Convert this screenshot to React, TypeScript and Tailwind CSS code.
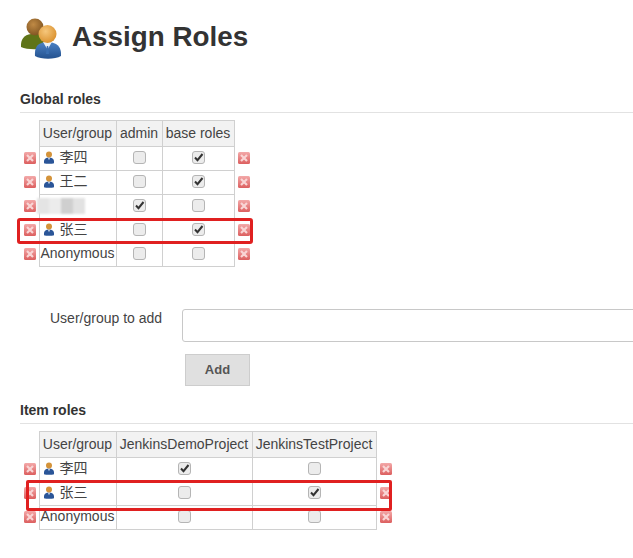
const FONT = "font-['Liberation_Sans','Noto_Sans_CJK_SC',sans-serif]";

const GLOBAL_ROLES = {
  columns: ["admin", "base roles"],
  widths: ["w-[46px]", "w-[72px]"],
  rows: [
    { name: "李四", user: true, checks: [false, true] },
    { name: "王二", user: true, checks: [false, true] },
    { name: "", blurred: true, checks: [true, false] },
    { name: "张三", user: true, checks: [false, true] },
    { name: "Anonymous", checks: [false, false] },
  ],
};

const ITEM_ROLES = {
  columns: ["JenkinsDemoProject", "JenkinsTestProject"],
  widths: ["w-[136px]", "w-[124px]"],
  rows: [
    { name: "李四", user: true, checks: [true, false] },
    { name: "张三", user: true, checks: [false, true] },
    { name: "Anonymous", checks: [false, false] },
  ],
};

function DeleteIcon() {
  return (
    <svg width="12" height="12" viewBox="0 0 12 12" className="block">
      <defs>
        <linearGradient id="del" x1="0" y1="0" x2="0" y2="1">
          <stop offset="0" stopColor="#f3a9a9" />
          <stop offset="1" stopColor="#dc5f5f" />
        </linearGradient>
      </defs>
      <rect x="0" y="0" width="12" height="12" rx="1.500" fill="url(#del)" />
      <path d="M3 3l6 6M9 3l-6 6" stroke="#f9d5d5" strokeWidth="2.200" />
    </svg>
  );
}

function UserIcon() {
  return (
    <svg width="10" height="13" viewBox="0 0 10 13" className="block shrink-0">
      <path d="M0 12.200c-.4-3.800 1-5.700 5-5.700s5.400 1.900 5 5.700c-2 .8-8 .8-10 0z" fill="#2a5598" />
      <path d="M4 6.800l1 2.400 1-2.400z" fill="#e8eef5" />
      <circle cx="5" cy="3.600" r="3" fill="#d4933a" />
    </svg>
  );
}

function TeamIcon() {
  return (
    <svg width="44" height="44" viewBox="0 0 44 44" className="block shrink-0">
      <defs>
        <radialGradient id="brownHead" cx="0.4" cy="0.35" r="0.7">
          <stop offset="0" stopColor="#c08a45" />
          <stop offset="1" stopColor="#7d5220" />
        </radialGradient>
        <radialGradient id="orangeHead" cx="0.4" cy="0.35" r="0.7">
          <stop offset="0" stopColor="#f6c77c" />
          <stop offset="1" stopColor="#d98f2b" />
        </radialGradient>
        <linearGradient id="blueBody" x1="0" y1="0" x2="0" y2="1">
          <stop offset="0" stopColor="#4a80c4" />
          <stop offset="1" stopColor="#24528f" />
        </linearGradient>
      </defs>
      <path d="M1 30c-.5-8 3-12 10-13h8c5 1 8 5 8 13-5 3-20 3-26 0z" fill="#5f7418" />
      <circle cx="15" cy="10" r="8.500" fill="url(#brownHead)" />
      <path d="M15 39c-.6-8 2-12 8-13.500h9c6 1.500 9.600 5.500 9 13.500-6 3.600-20 3.600-26 0z" fill="url(#blueBody)" />
      <path d="M23 25l4.500 7.500L32 25z" fill="#e9f0f7" />
      <path d="M26.800 29h1.400l.8 8h-3z" fill="#3a6fb2" />
      <circle cx="27.500" cy="17" r="9" fill="url(#orangeHead)" />
    </svg>
  );
}

function CheckBox({ checked }: { checked: boolean }) {
  return (
    <span className="mx-auto flex h-[13px] w-[13px] items-center justify-center rounded-[3px] border border-[#b5b5b5] bg-[#ececec]">
      {checked && (
        <svg width="11" height="11" viewBox="0 0 11 11">
          <path d="M2 5.500l2.500 2.700L9.500 2" fill="none" stroke="#333" strokeWidth="2" />
        </svg>
      )}
    </span>
  );
}

type Row = { name: string; user?: boolean; blurred?: boolean; checks: boolean[] };

function RolesTable({ columns, widths, rows }: { columns: string[]; widths: string[]; rows: Row[] }) {
  return (
    <table className="ml-[4px] border-collapse text-[14px] text-[#444]">
      <thead>
        <tr className="h-[26px]">
          <th className="w-[15px] p-0" />
          <th className="w-[77px] border border-[#d0d0d0] bg-[#f2f2f2] p-0 text-center font-normal">User/group</th>
          {columns.map((c, i) => (
            <th key={c} className={`${widths[i]} border border-[#d0d0d0] bg-[#f2f2f2] p-0 text-center font-normal`}>
              {c}
            </th>
          ))}
          <th className="w-[17px] p-0" />
        </tr>
      </thead>
      <tbody>
        {rows.map((r, idx) => (
          <tr key={idx} className="h-[24px]">
            <td className="p-0 pb-[2px]">
              <DeleteIcon />
            </td>
            <td className="border border-[#d0d0d0] p-0 pb-[2px] pl-[1px]">
              {r.user && (
                <span className="flex items-center gap-[6px] pl-[3px]">
                  <UserIcon />
                  <span>{r.name}</span>
                </span>
              )}
              {r.blurred && (
                <span className="-ml-[4px] flex h-[16px] w-[50px] blur-[1px]">
                  <span className="w-[12px] bg-[#e4e4e4]" />
                  <span className="w-[12px] bg-[#ececec]" />
                  <span className="w-[12px] bg-[#cfcfcf]" />
                  <span className="w-[12px] bg-[#e2e2e2]" />
                </span>
              )}
              {!r.user && !r.blurred && r.name}
            </td>
            {r.checks.map((c, i) => (
              <td key={i} className="border border-[#d0d0d0] p-0 pb-[2px] text-center">
                <CheckBox checked={c} />
              </td>
            ))}
            <td className="p-0 pb-[2px] pl-[3px]">
              <DeleteIcon />
            </td>
          </tr>
        ))}
      </tbody>
    </table>
  );
}

function SectionTitle({ children }: { children: string }) {
  return (
    <h3 className="border-b border-[#e2e2e2] pb-[5px] text-[14px] leading-[15px] font-bold text-[#333]">{children}</h3>
  );
}

export default function App() {
  return (
    <div className={`${FONT} relative h-[558px] w-[633px] overflow-hidden bg-white pt-[17px] pl-[20px]`}>
      <div className="flex items-center gap-[8px]">
        <TeamIcon />
        <h1 className="-mt-[5px] text-[27.8px] leading-[32px] font-bold text-[#333]">Assign Roles</h1>
      </div>

      <div className="mt-[31px]">
        <SectionTitle>Global roles</SectionTitle>
      </div>
      <div className="relative mt-[7px]">
        <RolesTable {...GLOBAL_ROLES} />
        <div className="absolute top-[98px] -left-[3px] h-[26px] w-[236px] rounded-[3px] border-[3px] border-[#e02020]" />
      </div>

      <div className="mt-[42px] flex items-start">
        <label className="mt-[1px] ml-[30px] w-[132px] shrink-0 text-[14px] leading-[16px] text-[#444]">
          User/group to add
        </label>
        <input readOnly className="h-[33px] w-[480px] shrink-0 rounded-[3px] border border-[#c8c8c8] bg-white" />
      </div>
      <button className="mt-[12px] ml-[165px] block h-[32px] w-[65px] border border-[#cdcdcd] bg-[#e0e0e0] text-[13px] font-bold text-[#555]">
        Add
      </button>

      <div className="mt-[17px]">
        <SectionTitle>Item roles</SectionTitle>
      </div>
      <div className="relative mt-[7px]">
        <RolesTable {...ITEM_ROLES} />
        <div className="absolute top-[49px] left-[6px] h-[31px] w-[366px] rounded-[2px] border-[3px] border-[#e02020]" />
      </div>
    </div>
  );
}
